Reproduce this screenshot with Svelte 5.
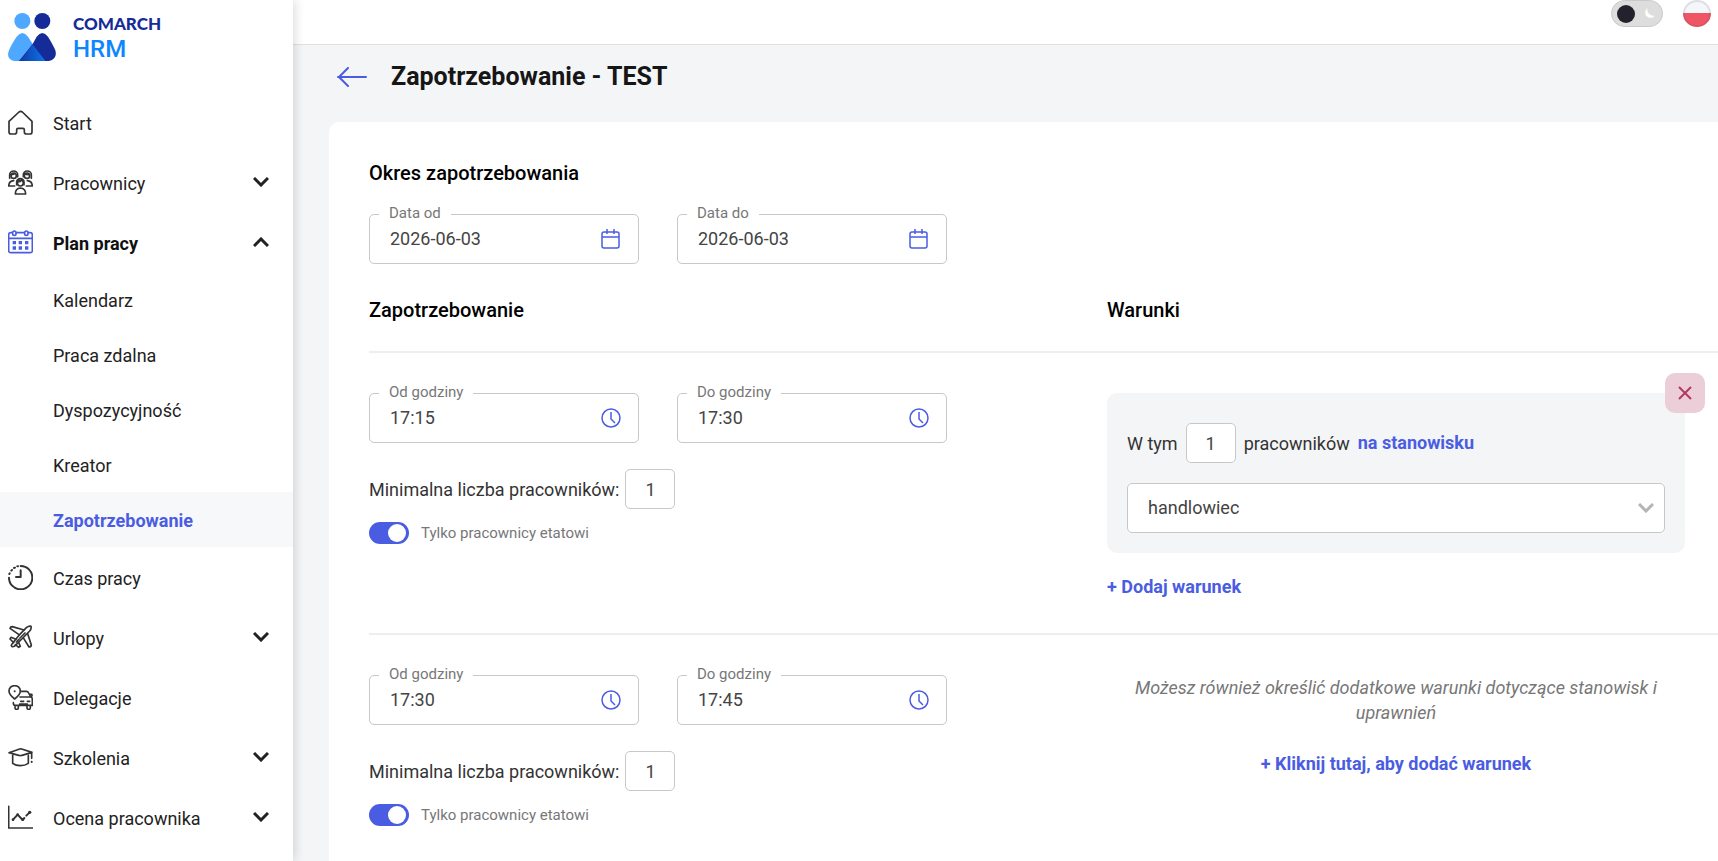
<script lang="ts">
	type MenuItem = {
		id: string;
		label: string;
		expandable?: boolean;
		children?: string[];
	};

	const menu: MenuItem[] = [
		{ id: 'start', label: 'Start' },
		{ id: 'people', label: 'Pracownicy', expandable: true },
		{
			id: 'plan',
			label: 'Plan pracy',
			expandable: true,
			children: ['Kalendarz', 'Praca zdalna', 'Dyspozycyjność', 'Kreator', 'Zapotrzebowanie']
		},
		{ id: 'time', label: 'Czas pracy' },
		{ id: 'leave', label: 'Urlopy', expandable: true },
		{ id: 'trips', label: 'Delegacje' },
		{ id: 'training', label: 'Szkolenia', expandable: true },
		{ id: 'review', label: 'Ocena pracownika', expandable: true }
	];

	let activePage = $state('Zapotrzebowanie');
	let openSection = $state('plan');
	let darkMode = $state(false);

	let dateFrom = $state('2026-06-03');
	let dateTo = $state('2026-06-03');

	let demands = $state([
		{
			from: '17:15',
			to: '17:30',
			minimum: 1,
			fullTimeOnly: true,
			conditions: [{ count: 1, position: 'handlowiec' }]
		},
		{ from: '17:30', to: '17:45', minimum: 1, fullTimeOnly: true, conditions: [] }
	]);

	function toggleSection(id: string) {
		openSection = openSection === id ? '' : id;
	}

	function addCondition(index: number) {
		demands[index].conditions.push({ count: 1, position: 'handlowiec' });
	}

	function removeCondition(index: number, condition: number) {
		demands[index].conditions.splice(condition, 1);
	}
</script>

{#snippet menuIcon(id: string)}
	<svg class="menu-icon" viewBox="0 0 75 75" aria-hidden="true">
		{#if id === 'start'}
			<path d="M3 34 33 6q5-4 10 0l29 28v31q0 7-7 7H55q-6 0-6-6v-7q0-4-4-4H30q-4 0-4 4v7q0 6-6 6H10q-7 0-7-7Z" />
		{:else if id === 'people'}
			<circle cx="17" cy="17" r="8" />
			<circle cx="57" cy="17" r="8" />
			<path d="M5 25V14a12 11 0 0 1 24 0v6M46 20v-6a12 11 0 0 1 24 0v11M10 14q8 0 11-4M50 10q4 4 14 4" />
			<path d="M17 32Q3 33 2 48h18M58 32q14 1 15 16H55" />
			<circle cx="37" cy="39" r="9" />
			<path d="M26 44v-8a11 10 0 0 1 22 0v8M29 36q9 0 12-5M37 54q-15 1-15 18h31q0-17-16-18Z" />
		{:else if id === 'plan'}
			<path d="M13 8H8q-6 0-6 6v48q0 6 6 6h59q6 0 6-6V14q0-6-6-6h-5M25 8h24M2 25h71" />
			<rect x="14" y="3" width="10" height="13" rx="5" />
			<rect x="50" y="3" width="10" height="13" rx="5" />
			<path class="solid" d="M14 33h10v10H14zM32 33h10v10H32zM51 33h10v10H51zM14 49h10v10H14zM32 49h10v10H32zM51 49h10v10H51z" />
		{:else if id === 'time'}
			<path class="bold" d="M38 3a35 35 0 1 1-35 35" />
			<path class="bold" d="M4 27l1-2M10 17l2-2M18 9l3-1M28 4l2 0M38 16v20H24" />
		{:else if id === 'leave'}
			<path d="M12 57q22-29 43-49 8-6 14-4 2 7-4 14Q46 38 19 64q-7 3-9-2 0-3 2-5Z" />
			<path d="M48 15 13 5q-6 0-7 5l27 19M59 26l11 34q-1 6-7 6L47 40M24 43 9 37l-3 5 11 11M32 53l5 11-5 3-10-8" />
			<path d="M25 51l8-8M36 39l6-6M45 30l6-6" />
		{:else if id === 'trips'}
			<path d="M20 42Q3 29 3 18a17 16 0 0 1 34 0q0 11-17 24Z" />
			<circle class="solid" cx="20" cy="19" r="3" />
			<path d="M38 19h17q5 0 7 5l6 12q5 1 5 7v18H22q-6 0-6-8M36 36h31M66 28h5q2 3 0 6M21 61v7q0 5 5 5t5-5v-7M57 61v7q0 5 5 5t5-5v-7M38 49h9M58 49h7M35 57h23" />
		{:else if id === 'training'}
			<path d="M3 23 35 12q3-1 6 0l31 10-30 9q-5 2-10 0ZM14 31v24q9 7 23 7t24-7V31M71 24v16" />
			<path class="bold" d="M71 50v1" />
		{:else if id === 'review'}
			<path d="M2 4v65h73" />
			<path class="bold" d="m15 44 14-15 15 16 5-6M55 32l10-10" />
			<g class="solid">
				<circle cx="15" cy="44" r="4" />
				<circle cx="29" cy="29" r="4" />
				<circle cx="44" cy="44" r="4" />
				<circle cx="65" cy="22" r="5" />
			</g>
		{/if}
	</svg>
{/snippet}

{#snippet field(id: string, label: string, value: string, icon: string)}
	<div class="field">
		<label for={id}>{label}</label>
		<input {id} type="text" {value} />
		<button type="button" aria-label={label}>
			<svg viewBox="0 0 20 20" aria-hidden="true">
				{#if icon === 'calendar'}
					<rect x="1" y="3" width="17" height="16" rx="2" />
					<path d="M1 8h17M6 0v5M13 0v5" />
				{:else}
					<circle cx="10" cy="10" r="9" />
					<path d="M10 4v7l4 4" />
				{/if}
			</svg>
		</button>
	</div>
{/snippet}

<div class="app">
	<aside class="sidebar">
		<a class="logo" href="#start">
			<svg viewBox="0 0 144 144" aria-hidden="true">
				<defs>
					<linearGradient id="overlap" x1="0" x2="1">
						<stop offset="0" stop-color="#1238a0" />
						<stop offset="1" stop-color="#0d74ec" />
					</linearGradient>
				</defs>
				<circle cx="43" cy="24" r="24" fill="#4ea8ff" />
				<circle cx="103" cy="24" r="24" fill="#152b98" />
				<path d="M26 71q17-22 34 0l14 22 38 51H19Q-7 139 3 112Q10 94 26 71Z" fill="#4ea8ff" />
				<path d="M86 71q17-22 34 0 15 24 22 41 7 27-19 32H33l41-51Z" fill="#152b98" />
				<path d="M73 93 112 144H32q9-4 17-16Z" fill="url(#overlap)" />
			</svg>
			<span class="brand">
				<span class="company">COMARCH</span>
				<span class="product">HRM</span>
			</span>
		</a>

		<nav>
			{#each menu as item}
				<button
					type="button"
					class="menu-item"
					class:open={openSection === item.id}
					onclick={() => toggleSection(item.id)}>
					{@render menuIcon(item.id)}
					<span class="menu-label">{item.label}</span>
					{#if item.expandable}
						<svg class="chevron" viewBox="0 0 16 10" aria-hidden="true">
							<path d="m1 1 7 7 7-7" />
						</svg>
					{/if}
				</button>
				{#if item.children && openSection === item.id}
					{#each item.children as child}
						<a
							href="#{child}"
							class="submenu-item"
							class:active={activePage === child}
							onclick={() => (activePage = child)}>
							{child}
						</a>
					{/each}
				{/if}
			{/each}
		</nav>
	</aside>

	<div class="content">
		<header class="topbar">
			<button
				type="button"
				class="theme-switch"
				class:dark={darkMode}
				role="switch"
				aria-checked={darkMode}
				aria-label="Tryb ciemny"
				onclick={() => (darkMode = !darkMode)}>
				<span class="theme-knob"></span>
				<svg viewBox="0 0 12 12" aria-hidden="true">
					<path d="M4 1a5 5 0 1 0 7 7A6 6 0 0 1 4 1Z" />
				</svg>
			</button>
			<button type="button" class="flag" aria-label="Polski"></button>
		</header>

		<main>
			<div class="title-row">
				<a href="#back" aria-label="Wstecz">
					<svg viewBox="0 0 30 20" aria-hidden="true">
						<path d="M29 10H1M11 1l-9 9 9 9" />
					</svg>
				</a>
				<h1>Zapotrzebowanie - TEST</h1>
			</div>

			<section class="panel">
				<h2>Okres zapotrzebowania</h2>
				<div class="fields period">
					{@render field('date-from', 'Data od', dateFrom, 'calendar')}
					{@render field('date-to', 'Data do', dateTo, 'calendar')}
				</div>

				<div class="columns headings">
					<h2>Zapotrzebowanie</h2>
					<h2>Warunki</h2>
				</div>

				{#each demands as demand, i}
					<div class="columns demand">
						<div>
							<div class="fields">
								{@render field(`from-${i}`, 'Od godziny', demand.from, 'clock')}
								{@render field(`to-${i}`, 'Do godziny', demand.to, 'clock')}
							</div>
							<div class="minimum">
								<label for="minimum-{i}">Minimalna liczba pracowników:</label>
								<input id="minimum-{i}" class="count" type="number" bind:value={demand.minimum} />
							</div>
							<label class="toggle">
								<input type="checkbox" bind:checked={demand.fullTimeOnly} />
								<span>Tylko pracownicy etatowi</span>
							</label>
						</div>

						{#if demand.conditions.length}
							<div class="conditions">
								{#each demand.conditions as condition, c}
									<div class="condition">
										<div class="condition-text">
											<label for="count-{i}-{c}">W tym</label>
											<input id="count-{i}-{c}" class="count" type="number" bind:value={condition.count} />
											<span>pracowników</span>
											<button type="button" class="link">na stanowisku</button>
										</div>
										<div class="select">
											<select aria-label="Stanowisko" bind:value={condition.position}>
												<option>handlowiec</option>
											</select>
											<svg class="chevron" viewBox="0 0 16 10" aria-hidden="true">
												<path d="m1 1 7 7 7-7" />
											</svg>
										</div>
										<button
											type="button"
											class="remove"
											aria-label="Usuń warunek"
											onclick={() => removeCondition(i, c)}>
											<svg viewBox="0 0 14 14" aria-hidden="true">
												<path d="m1 1 12 12M13 1 1 13" />
											</svg>
										</button>
									</div>
								{/each}
								<button type="button" class="link" onclick={() => addCondition(i)}>+ Dodaj warunek</button>
							</div>
						{:else}
							<div class="empty">
								<p>Możesz również określić dodatkowe warunki dotyczące stanowisk i uprawnień</p>
								<button type="button" class="link" onclick={() => addCondition(i)}>
									+ Kliknij tutaj, aby dodać warunek
								</button>
							</div>
						{/if}
					</div>
				{/each}
			</section>
		</main>
	</div>
</div>

<style>
	:global(body) {
		background: #f4f5f7;
		font-family: Roboto, 'Liberation Sans', sans-serif;
		font-size: 18px;
		color: #333;
	}

	.app {
		--accent: #4a5de2;
		--border: #c8c8c8;
		display: flex;
		height: 100vh;
		overflow: hidden;
	}

	.app * {
		box-sizing: border-box;
	}

	h1,
	h2,
	p {
		margin: 0;
	}

	button,
	input,
	select {
		font: inherit;
		color: inherit;
	}

	button {
		border: none;
		background: none;
		padding: 0;
		cursor: pointer;
	}

	svg {
		display: block;
		fill: none;
		stroke: currentColor;
	}

	.sidebar {
		position: relative;
		z-index: 1;
		flex: none;
		width: 293px;
		background: #fff;
		box-shadow: 2px 0 10px rgba(0, 0, 0, 0.14);
	}

	.logo {
		display: flex;
		gap: 17px;
		height: 92px;
		padding: 13px 8px 0;
		text-decoration: none;
	}

	.logo svg {
		width: 48px;
		height: 48px;
		stroke: none;
	}

	.brand {
		display: flex;
		flex-direction: column;
	}

	.company {
		font-family: Lato, sans-serif;
		font-size: 17px;
		font-weight: 900;
		line-height: 22px;
		color: #152b98;
	}

	.product {
		font-size: 24px;
		font-weight: 500;
		line-height: 28px;
		color: #0d86ff;
	}

	.menu-item {
		display: flex;
		align-items: center;
		gap: 20px;
		width: 100%;
		height: 60px;
		padding: 0 24px 0 8px;
		text-align: left;
		color: #222;
	}

	.menu-label {
		flex: 1;
		padding-top: 4px;
		line-height: 24px;
	}

	.menu-item.open .menu-label {
		font-weight: 700;
		color: #111;
	}

	.menu-item.open .menu-icon {
		color: var(--accent);
	}

	.menu-item.open .chevron {
		transform: rotate(180deg);
	}

	.menu-icon {
		width: 25px;
		height: 25px;
		color: #333;
		stroke-width: 5;
		stroke-linecap: round;
		stroke-linejoin: round;
	}

	.menu-icon .solid {
		fill: currentColor;
		stroke: none;
	}

	.menu-icon .bold {
		stroke-width: 6;
	}

	.chevron {
		width: 16px;
		height: 10px;
		stroke-width: 3;
	}

	.submenu-item {
		display: flex;
		align-items: center;
		height: 55px;
		padding: 2px 0 0 53px;
		color: #222;
		text-decoration: none;
	}

	.submenu-item.active {
		background: #f7f8fa;
		font-weight: 700;
		color: var(--accent);
	}

	.content {
		display: flex;
		flex: 1;
		flex-direction: column;
		min-width: 0;
	}

	.topbar {
		display: flex;
		flex: none;
		justify-content: flex-end;
		gap: 20px;
		height: 45px;
		padding-right: 7px;
		border-bottom: 1px solid #e0e0e0;
		background: #fff;
	}

	.theme-switch {
		display: flex;
		align-items: center;
		justify-content: space-between;
		width: 52px;
		height: 27px;
		padding: 0 6px 0 5px;
		border: 1px solid #c9c9c9;
		border-radius: 14px;
		background: #ddd;
	}

	.theme-switch.dark {
		flex-direction: row-reverse;
	}

	.theme-knob {
		width: 18px;
		height: 18px;
		border-radius: 50%;
		background: #23222c;
	}

	.theme-switch svg {
		width: 13px;
		height: 13px;
		fill: #fff;
		stroke: none;
	}

	.flag {
		width: 28px;
		height: 27px;
		border: 2px solid rgba(90, 90, 100, 0.15);
		border-radius: 50%;
		background: linear-gradient(#f5f6fa 50%, #ef5565 50%) border-box;
	}

	main {
		display: flex;
		flex: 1;
		flex-direction: column;
		padding-left: 36px;
	}

	.title-row {
		display: flex;
		align-items: center;
		gap: 24px;
		padding: 16px 8px 29px;
	}

	.title-row svg {
		width: 30px;
		height: 20px;
		stroke: var(--accent);
		stroke-width: 2;
		stroke-linecap: round;
		stroke-linejoin: round;
	}

	h1 {
		font-size: 25px;
		font-weight: 700;
		line-height: 32px;
		color: #161616;
	}

	h2 {
		font-size: 20px;
		font-weight: 500;
		line-height: 24px;
		color: #000;
	}

	.panel {
		flex: 1;
		padding: 39px 0 0 40px;
		border-top-left-radius: 10px;
		background: #fff;
	}

	.columns {
		display: grid;
		grid-template-columns: minmax(0, 738fr) minmax(0, 611fr);
	}

	.headings {
		padding: 34px 0 29px;
	}

	.fields {
		display: flex;
		gap: 38px;
	}

	.period {
		margin-top: 29px;
	}

	.field {
		position: relative;
		display: flex;
		align-items: center;
		width: 270px;
		height: 50px;
		border: 1px solid var(--border);
		border-radius: 5px;
	}

	.field label {
		position: absolute;
		top: -12px;
		left: 9px;
		padding: 0 10px;
		background: #fff;
		font-size: 15px;
		line-height: 20px;
		color: #777;
	}

	.field input {
		flex: 1;
		min-width: 0;
		padding: 0 0 2px 20px;
		border: none;
		background: none;
		color: #444;
		outline: none;
	}

	.field button {
		margin-right: 17px;
		color: var(--accent);
	}

	.field svg {
		width: 20px;
		height: 20px;
		stroke-width: 1.5;
	}

	.demand {
		padding: 40px 0 36px;
		border-top: 2px solid #eee;
	}

	.minimum {
		display: flex;
		align-items: center;
		gap: 6px;
		margin: 26px 0 13px;
	}

	.count {
		width: 50px;
		height: 40px;
		padding: 0;
		border: 1px solid var(--border);
		border-radius: 5px;
		background: #fff;
		text-align: center;
		color: #444;
		appearance: textfield;
	}

	.count::-webkit-inner-spin-button {
		display: none;
	}

	.toggle {
		display: flex;
		align-items: center;
		gap: 12px;
		height: 22px;
		font-size: 15px;
		color: #777;
	}

	.toggle input {
		display: flex;
		width: 40px;
		height: 22px;
		margin: 0;
		padding: 2px 3px;
		border-radius: 11px;
		background: #bbb;
		appearance: none;
	}

	.toggle input::before {
		content: '';
		width: 18px;
		height: 18px;
		border-radius: 50%;
		background: #fff;
	}

	.toggle input:checked {
		justify-content: flex-end;
		background: var(--accent);
	}

	.conditions,
	.empty {
		padding-right: 33px;
	}

	.condition {
		position: relative;
		margin-bottom: 24px;
		padding: 30px 20px 20px;
		border-radius: 10px;
		background: #f4f5f7;
	}

	.condition-text {
		display: flex;
		align-items: center;
		gap: 8px;
		margin-bottom: 20px;
	}

	.link {
		display: block;
		font-weight: 700;
		line-height: 20px;
		color: var(--accent);
	}

	.select {
		position: relative;
	}

	.select select {
		display: block;
		width: 100%;
		height: 50px;
		padding: 0 40px 2px 20px;
		border: 1px solid var(--border);
		border-radius: 5px;
		background: #fff;
		color: #444;
		appearance: none;
	}

	.select .chevron {
		position: absolute;
		top: 20px;
		right: 11px;
		color: #b5b5b5;
		pointer-events: none;
	}

	.remove {
		position: absolute;
		top: -20px;
		right: -20px;
		display: grid;
		place-items: center;
		width: 40px;
		height: 40px;
		border-radius: 10px;
		background: #ebced8;
		color: #b23a62;
	}

	.remove svg {
		width: 14px;
		height: 14px;
		stroke-width: 2;
	}

	.empty p {
		margin-bottom: 29px;
		padding: 0 20px;
		font-style: italic;
		line-height: 25px;
		text-align: center;
		color: #777;
	}

	.empty .link {
		margin: 0 auto;
	}
</style>
